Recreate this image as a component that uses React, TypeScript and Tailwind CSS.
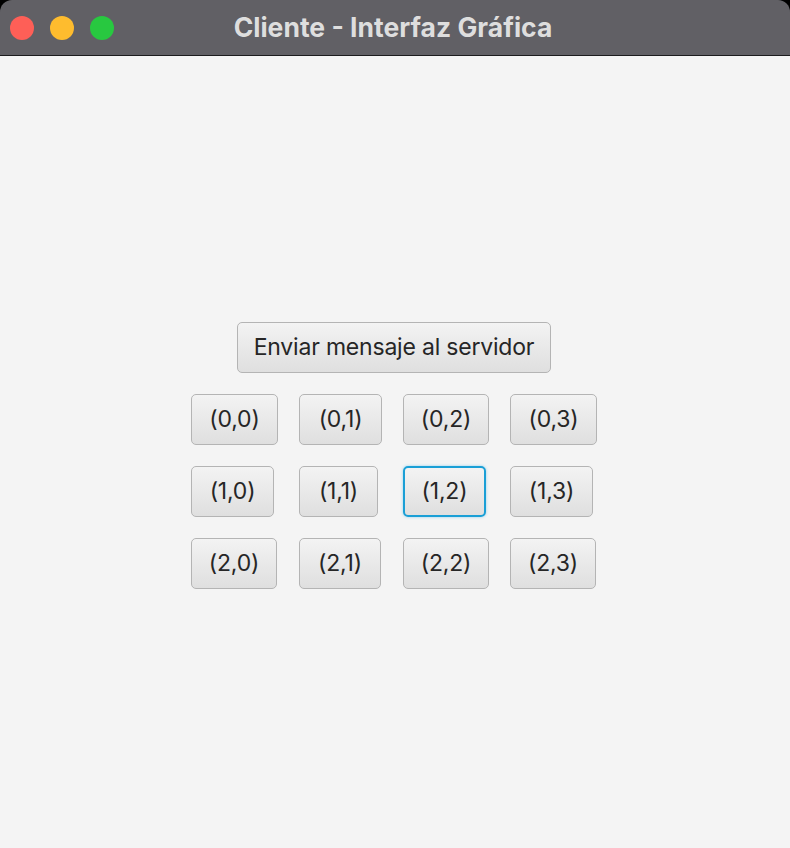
import React from "react";

const rows = [
    [
        { label: "(0,0)", w: "w-[87px]" },
        { label: "(0,1)", w: "w-[83px]" },
        { label: "(0,2)", w: "w-[86px]" },
        { label: "(0,3)", w: "w-[87px]" },
    ],
    [
        { label: "(1,0)", w: "w-[83px]" },
        { label: "(1,1)", w: "w-[79px]" },
        { label: "(1,2)", w: "w-[83px]" },
        { label: "(1,3)", w: "w-[83px]" },
    ],
    [
        { label: "(2,0)", w: "w-[86px]" },
        { label: "(2,1)", w: "w-[82px]" },
        { label: "(2,2)", w: "w-[86px]" },
        { label: "(2,3)", w: "w-[86px]" },
    ],
];

function FxButton({
    label,
    width,
    focused,
}: {
    label: string;
    width: string;
    focused?: boolean;
}) {
    const base =
        "h-[51px] rounded-[5px] bg-gradient-to-b from-[#f3f3f3] to-[#dfdfdf] text-[23px] leading-none tracking-[-0.2px] text-[#262626] whitespace-nowrap ";
    return (
        <button
            className={
                base +
                width +
                (focused
                    ? " border-2 border-[#1a9fd6] shadow-[0_0_3px_#8fd0ee]"
                    : " border border-[#b4b4b4]")
            }
        >
            {label}
        </button>
    );
}

export default function App() {
    return (
        <div
            className="flex h-[848px] w-[790px] flex-col bg-black"
            style={{ fontFamily: "Inter, 'Open Sans', sans-serif" }}
        >
            {/* title bar */}
            <div className="relative flex h-[56px] shrink-0 items-center justify-center rounded-t-[12px] border-b border-[#1c1c1e] bg-[#616065]">
                <div className="absolute left-[10px] top-[16px] flex gap-[16px]">
                    <span className="h-[24px] w-[24px] rounded-full bg-[#fe5f57]" />
                    <span className="h-[24px] w-[24px] rounded-full bg-[#febc2e]" />
                    <span className="h-[24px] w-[24px] rounded-full bg-[#28c840]" />
                </div>
                <span className="pr-[4px] text-[26.5px] font-bold text-[#dedede]">
                    Cliente - Interfaz Gráfica
                </span>
            </div>

            {/* content */}
            <div className="flex flex-1 flex-col items-center justify-center gap-[21px] bg-[#f4f4f4] pt-[6px] pr-[2px]">
                <FxButton label="Enviar mensaje al servidor" width="w-[314px]" />
                <div className="grid grid-cols-[87px_83px_86px_87px] gap-[21px]">
                    {rows.map((row, r) =>
                        row.map((b, c) => (
                            <FxButton
                                key={b.label}
                                label={b.label}
                                width={b.w}
                                focused={r === 1 && c === 2}
                            />
                        ))
                    )}
                </div>
            </div>
        </div>
    );
}
